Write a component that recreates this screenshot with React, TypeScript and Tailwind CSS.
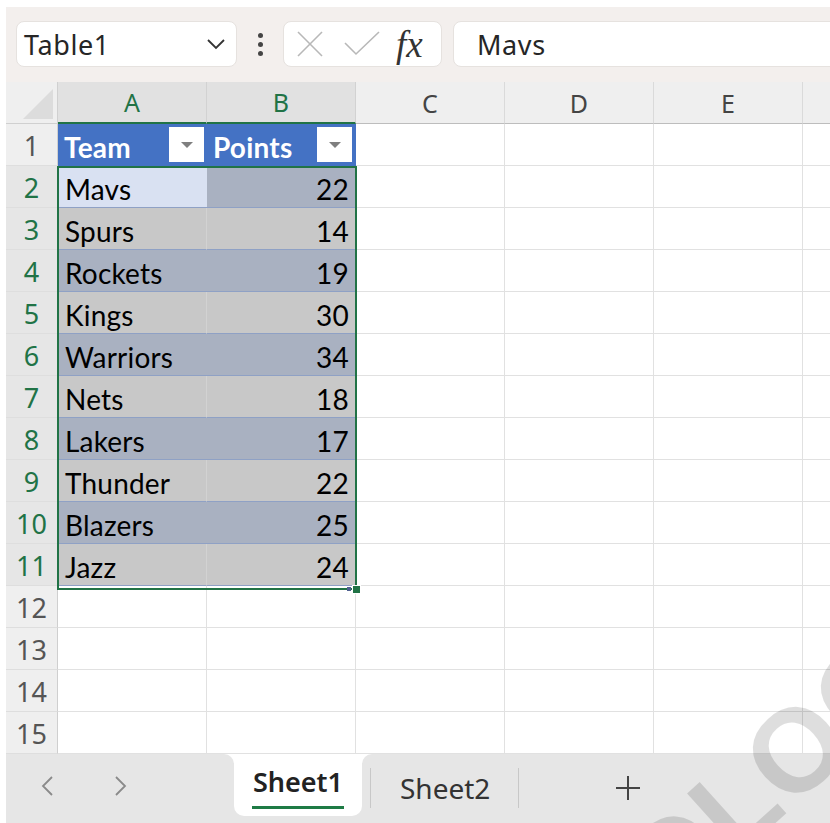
import React from "react";

const ui = { fontFamily: '"Noto Sans", "Open Sans", sans-serif' };
const cellFont = { fontFamily: 'Lato, "Noto Sans", sans-serif', letterSpacing: "0.2px" };

const teams: [string, number][] = [
  ["Mavs", 22],
  ["Spurs", 14],
  ["Rockets", 19],
  ["Kings", 30],
  ["Warriors", 34],
  ["Nets", 18],
  ["Lakers", 17],
  ["Thunder", 22],
  ["Blazers", 25],
  ["Jazz", 24],
];

const cols = ["A", "B", "C", "D", "E", "F"];

function FilterButton() {
  return (
    <div className="w-[35px] h-[35px] bg-white flex items-center justify-center shrink-0">
      <svg width="14" height="8" viewBox="0 0 14 8">
        <polygon points="1,1 13,1 7,7" fill="#7f7f7f" />
      </svg>
    </div>
  );
}

function EmptyCells() {
  return (
    <>
      <div className="border-r border-b border-[#e1e1e1] bg-white" />
      <div className="border-r border-b border-[#e1e1e1] bg-white" />
      <div className="border-r border-b border-[#e1e1e1] bg-white" />
      <div className="border-r border-b border-[#e1e1e1] bg-white" />
    </>
  );
}

export default function App() {
  return (
    <div className="relative w-[830px] h-[823px] overflow-hidden bg-white pl-[6px] pt-[7px] flex flex-col">
      {/* formula bar */}
      <div className="h-[75px] bg-[#f3efed] flex items-start pt-[14px] pl-[10px] overflow-hidden shrink-0" style={ui}>
        <div className="w-[221px] h-[46px] shrink-0 rounded-[8px] bg-white border border-[#e6e2df] flex items-center justify-between pl-[7px] pr-[10px]">
          <span className="text-[27px] tracking-[0.6px] text-[#262626] leading-none">Table1</span>
          <svg width="20" height="12" viewBox="0 0 20 12">
            <polyline points="2,2 10,10 18,2" fill="none" stroke="#333" strokeWidth="1.8" />
          </svg>
        </div>
        <div className="w-[46px] h-[46px] shrink-0 flex flex-col items-center justify-center gap-[4px]">
          <div className="w-[5px] h-[5px] rounded-full bg-[#444]" />
          <div className="w-[5px] h-[5px] rounded-full bg-[#444]" />
          <div className="w-[5px] h-[5px] rounded-full bg-[#444]" />
        </div>
        <div className="w-[159px] h-[46px] shrink-0 rounded-[8px] bg-white border border-[#e6e2df] flex items-center pl-[13px]">
          <svg width="26" height="26" viewBox="0 0 26 26">
            <line x1="1" y1="1" x2="25" y2="25" stroke="#b8b8b8" strokeWidth="1.6" />
            <line x1="25" y1="1" x2="1" y2="25" stroke="#b8b8b8" strokeWidth="1.6" />
          </svg>
          <svg width="36" height="26" viewBox="0 0 36 26" className="ml-[21px]">
            <polyline points="1,12 12,23 35,1" fill="none" stroke="#b8b8b8" strokeWidth="1.6" />
          </svg>
          <span
            className="ml-[16px] text-[37px] italic text-[#333] leading-none"
            style={{ fontFamily: '"Liberation Serif", "DejaVu Serif", serif' }}
          >
            fx
          </span>
        </div>
        <div className="w-[420px] h-[46px] shrink-0 ml-[11px] rounded-[8px] bg-white border border-[#e6e2df] flex items-center pl-[23px]">
          <span className="text-[27px] tracking-[0.6px] text-[#262626] leading-none">Mavs</span>
        </div>
      </div>

      {/* sheet grid */}
      <div className="relative flex-1 overflow-hidden">
        <div className="grid grid-cols-[52px_149px_149px_149px_149px_149px_149px] auto-rows-[42px]">
          {/* column header row */}
          <div className="bg-[#efefef] border-r border-b border-[#d0d0d0] flex items-end justify-end p-[4px]">
            <svg width="30" height="30" viewBox="0 0 30 30">
              <polygon points="30,0 30,30 0,30" fill="#dcdcdc" />
            </svg>
          </div>
          {cols.map((c, i) => (
            <div
              key={c}
              className={
                i < 2
                  ? "bg-[#e1e1e1] border-r border-[#d2d2d2] border-b-2 border-b-[#217346] flex items-center justify-center pt-[2px] text-[25px] text-[#217346]"
                  : "bg-[#efefef] border-r border-[#dadada] border-b border-b-[#bdbdbd] flex items-center justify-center pt-[2px] text-[25px] text-[#444]"
              }
              style={ui}
            >
              {c}
            </div>
          ))}

          {/* row 1: table header */}
          <div className="bg-[#efefef] border-r border-[#cfcfcf] border-b border-b-[#dedede] flex items-center justify-center pt-[3px] text-[27px] text-[#555]" style={ui}>
            1
          </div>
          <div className="bg-[#4472c4] border-r border-b border-[#4472c4] flex items-center justify-between pl-[6px] pr-[2px]" style={cellFont}>
            <span className="text-[28px] font-bold text-white pt-[4px]">Team</span>
            <FilterButton />
          </div>
          <div className="bg-[#4472c4] border-r border-b border-[#4472c4] flex items-center justify-between pl-[6px] pr-[3px]" style={cellFont}>
            <span className="text-[28px] font-bold text-white pt-[4px]">Points</span>
            <FilterButton />
          </div>
          <EmptyCells />

          {/* data rows */}
          {teams.map(([team, pts], i) => {
            const row = i + 2;
            const banded = i % 2 === 0;
            const aBg = i === 0 ? "bg-[#d9e1f2]" : banded ? "bg-[#a9b1c1]" : "bg-[#c8c8c8]";
            return (
              <React.Fragment key={team}>
                <div
                  className="bg-[#e6e6e6] border-r border-[#cfcfcf] border-b border-b-[#dedede] flex items-center justify-center pt-[3px] text-[27px] text-[#217346]"
                  style={ui}
                >
                  {row}
                </div>
                <div
                  className={`${aBg} border-b border-[#8fa1c5] ${banded ? "" : "border-r border-r-[#d2d2d2]"} flex items-center pl-[7px] pt-[5px] text-[28px] text-black`}
                  style={cellFont}
                >
                  {team}
                </div>
                <div
                  className={`${banded ? "bg-[#a9b1c1]" : "bg-[#c8c8c8]"} border-b border-[#8fa1c5] border-r border-r-[#e1e1e1] flex items-center justify-end pr-[6px] pt-[5px] text-[28px] text-black`}
                  style={cellFont}
                >
                  {pts}
                </div>
                <EmptyCells />
              </React.Fragment>
            );
          })}

          {/* empty rows */}
          {[12, 13, 14, 15].map((r) => (
            <React.Fragment key={r}>
              <div
                className="bg-[#efefef] border-r border-[#cfcfcf] border-b border-b-[#dedede] flex items-center justify-center pt-[3px] text-[27px] text-[#555]"
                style={ui}
              >
                {r}
              </div>
              <div className="border-r border-b border-[#e1e1e1] bg-white" />
              <div className="border-r border-b border-[#e1e1e1] bg-white" />
              <EmptyCells />
            </React.Fragment>
          ))}
        </div>

        {/* selection outline with fill handle */}
        <div className="absolute left-[51px] top-[84px] w-[300px] h-[424px] border-2 border-[#217346] pointer-events-none">
          <div className="absolute right-[-6px] bottom-[-6px] w-[9px] h-[9px] bg-[#217346] border border-white" />
          <div className="absolute right-[4px] bottom-[-3px] w-[4px] h-[4px] bg-[#4f5f8f]" />
        </div>
      </div>

      {/* sheet tabs */}
      <div className="h-[69px] shrink-0 flex bg-white" style={ui}>
        <div className="w-[228px] bg-[#e6e6e6] rounded-tr-[10px] flex items-center pl-[34px] gap-[60px] pb-[6px]">
          <svg width="14" height="22" viewBox="0 0 14 22">
            <polyline points="12,2 3,11 12,20" fill="none" stroke="#8a8a8a" strokeWidth="1.8" />
          </svg>
          <svg width="14" height="22" viewBox="0 0 14 22">
            <polyline points="2,2 11,11 2,20" fill="none" stroke="#8a8a8a" strokeWidth="1.8" />
          </svg>
        </div>
        <div className="w-[128px] bg-[#e6e6e6] flex flex-col">
          <div className="h-[62px] bg-white rounded-b-[10px] flex flex-col items-center pt-[11px]">
            <span className="text-[27px] font-semibold text-[#222] leading-[34px]">Sheet1</span>
            <div className="w-[92px] h-[3px] bg-[#1e7b45] mt-[7px]" />
          </div>
        </div>
        <div className="flex-1 bg-[#e6e6e6] rounded-tl-[10px] flex items-center pb-[2px]">
          <div className="ml-[8px] w-[1px] h-[40px] bg-[#c8c8c8]" />
          <span className="ml-[29px] text-[28px] text-[#333]">Sheet2</span>
          <div className="ml-[28px] w-[1px] h-[40px] bg-[#c8c8c8]" />
          <svg width="26" height="26" viewBox="0 0 26 26" className="ml-[96px]">
            <line x1="13" y1="1" x2="13" y2="25" stroke="#444" strokeWidth="2" />
            <line x1="1" y1="13" x2="25" y2="13" stroke="#444" strokeWidth="2" />
          </svg>
        </div>
      </div>

      {/* watermark */}
      <div
        className="absolute left-[386px] top-[1039px] origin-top-left rotate-[-42deg] text-[118px] font-bold leading-none text-[rgba(0,0,0,0.13)] whitespace-nowrap pointer-events-none select-none"
        style={{ fontFamily: '"Liberation Sans", Arial, sans-serif' }}
      >
        STATOLOGY
      </div>
    </div>
  );
}
